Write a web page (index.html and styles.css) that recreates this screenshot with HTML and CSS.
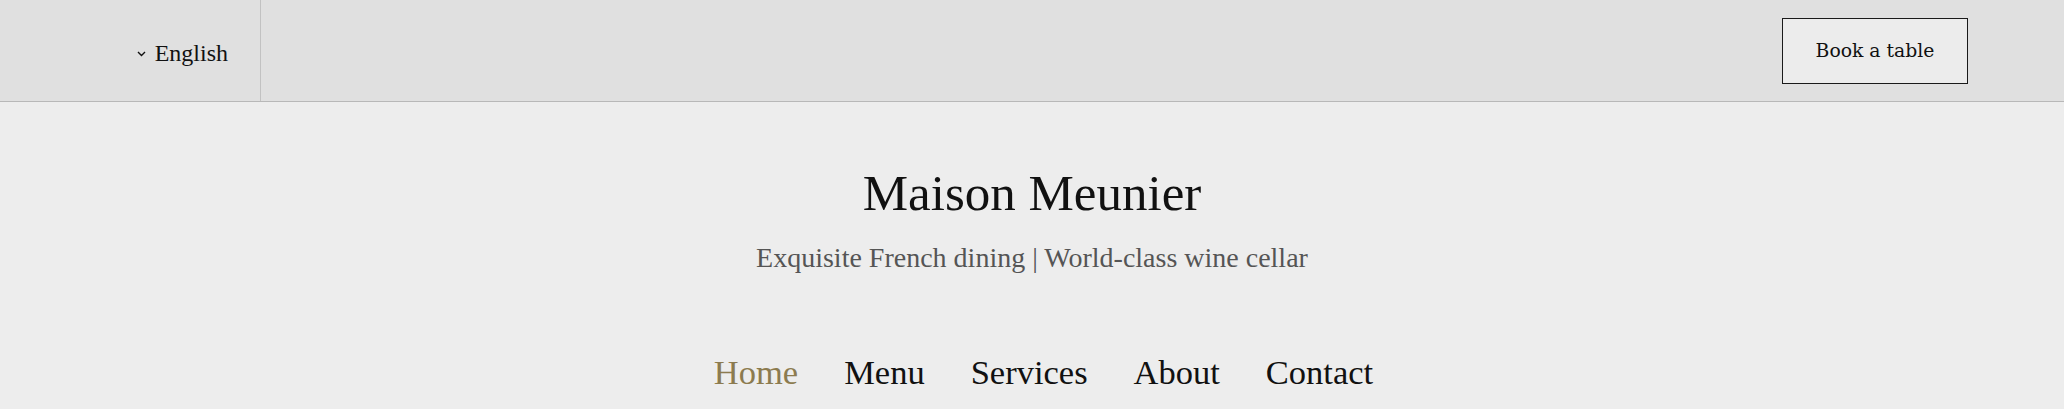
FILE: index.html
```html
<!DOCTYPE html>
<html lang="en">
<head>
    <meta charset="UTF-8">
    <meta name="viewport" content="width=device-width, initial-scale=1.0">
    <title>Maison Meunier</title>
    <link rel="stylesheet" href="styles.css">
</head>
<body>
    <header class="topbar">
        <div class="lang">
            <button class="lang-toggle">
                <svg class="chevron" width="9" height="6" viewBox="0 0 9 6" aria-hidden="true">
                    <path d="M1 1l3.5 3.5L8 1" fill="none" stroke="#111" stroke-width="1.4"/>
                </svg>
                English
            </button>
        </div>
        <div class="topbar-right">
            <a class="book-btn" href="#">Book a table</a>
        </div>
    </header>

    <main class="hero">
        <h1 class="brand">Maison Meunier</h1>
        <p class="tagline">Exquisite French dining | World-class wine cellar</p>
        <nav class="main-nav">
            <a href="#" class="active">Home</a>
            <a href="#">Menu</a>
            <a href="#">Services</a>
            <a href="#">About</a>
            <a href="#">Contact</a>
        </nav>
    </main>
</body>
</html>
```

FILE: styles.css
```css
body {
    margin: 0;
    background: #ededed;
    font-family: "Liberation Serif", "Times New Roman", serif;
    color: #111;
}
.topbar {
    display: flex;
    align-items: center;
    height: 101px;
    background: #e0e0e0;
    border-bottom: 1px solid #b8b8b8;
}
.lang {
    width: 261px;
    height: 100%;
    border-right: 1px solid #c2c2c2;
    display: flex;
    align-items: center;
    justify-content: flex-end;
    box-sizing: border-box;
    padding-right: 32px;
}
.lang-toggle {
    display: flex;
    align-items: center;
    gap: 9px;
    background: none;
    border: none;
    padding: 5px 0 0;
    font-family: inherit;
    font-size: 24px;
    color: #111;
    cursor: pointer;
}
.chevron {
    margin-top: 1px;
}
.topbar-right {
    flex: 1;
    display: flex;
    justify-content: flex-end;
    padding-right: 96px;
}
.book-btn {
    display: flex;
    align-items: center;
    justify-content: center;
    width: 186px;
    height: 66px;
    box-sizing: border-box;
    border: 1.5px solid #1a1a1a;
    background: #ececec;
    color: #111;
    font-family: "DejaVu Serif", serif;
    font-size: 18.8px;
    text-decoration: none;
}
.hero {
    text-align: center;
    padding-top: 61px;
}
.brand {
    margin: 0;
    font-size: 51px;
    font-weight: normal;
    line-height: 1.2;
}
.tagline {
    margin: 17px 0 0;
    font-size: 28px;
    line-height: 1.2;
    color: #555;
}
.main-nav {
    display: flex;
    justify-content: center;
    gap: 46px;
    margin-top: 77px;
    padding-left: 23px;
}
.main-nav a {
    font-size: 34.5px;
    line-height: 1.2;
    color: #111;
    text-decoration: none;
}
.main-nav a.active {
    color: #8c7b4f;
}
```
